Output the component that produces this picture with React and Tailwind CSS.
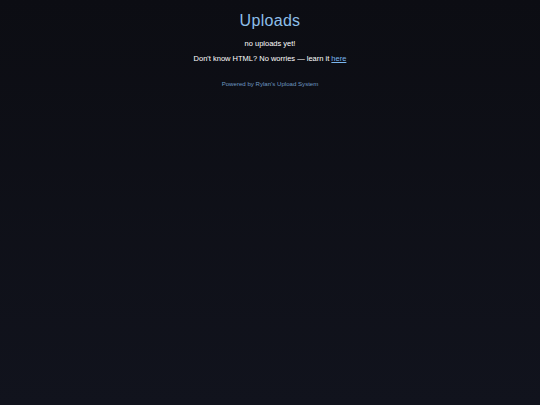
export default function App() {
	return (
		<div className="min-h-[405px] bg-gradient-to-b from-[#0c0d13] to-[#11131d] text-white font-['Liberation_Sans',Arial,sans-serif] flex flex-col items-center pt-[11px]">
			<h1 className="text-[16px] leading-[19px] tracking-[0.3px] text-[#8dbfe9]">Uploads</h1>
			<p className="mt-[9px] text-[7.5px] leading-[10px]">no uploads yet!</p>
			<p className="mt-[5px] text-[7.5px] leading-[10px]">
				Don&apos;t know HTML? No worries — learn it{" "}
				<a href="#" className="text-[#7ab6ee] underline">
					here
				</a>
			</p>
			<p className="mt-[16px] text-[6.1px] leading-[8px] text-[#6d98c2]">
				Powered by Rylan&apos;s Upload System
			</p>
		</div>
	);
}
